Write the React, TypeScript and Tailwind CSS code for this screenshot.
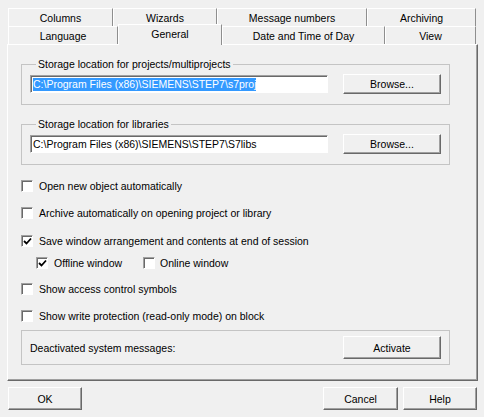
import React from "react";

// classic win32 look, Liberation Sans stands in for Tahoma
const btn =
  "flex items-center justify-center bg-[#f0f0f0] border-t border-l border-t-white border-l-white border-r border-b border-r-[#696969] border-b-[#696969] shadow-[inset_-1px_-1px_0_#a0a0a0]";
const sunken =
  "border-t border-l border-t-[#a0a0a0] border-l-[#a0a0a0] border-r border-b border-r-white border-b-white shadow-[inset_1px_1px_0_#696969]";

const Tab = ({ label, w, active }: { label: string; w: string; active?: boolean }) => (
  <div
    className={`${w} flex items-center justify-center border-t border-l border-t-white border-l-white border-r border-r-[#8e8e8e] bg-[#f0f0f0] ${
      active ? "relative z-10 h-[21px] -mt-[2px] pb-[2px]" : "h-[18px] pt-[1px]"
    }`}
  >
    {label}
  </div>
);

const Check = ({ checked }: { checked?: boolean }) => (
  <div className={`w-[12px] h-[12px] shrink-0 bg-white ${sunken} flex items-center justify-center`}>
    {checked && (
      <svg width="9" height="9" viewBox="0 0 9 9" className="mt-[1px] ml-[1px]">
        <path d="M1 4 L3.5 6.5 L8 1.5" stroke="#000" strokeWidth="1.8" fill="none" />
      </svg>
    )}
  </div>
);

const CheckRow = ({ label, checked, className }: { label: string; checked?: boolean; className: string }) => (
  <div className={`flex items-center h-[12px] ${className}`}>
    <Check checked={checked} />
    <span className="ml-[6px]">{label}</span>
  </div>
);

const PathBox = ({ title, path, selected }: { title: string; path: string; selected?: boolean }) => (
  <fieldset className="w-[429px] border border-[#c4c4c4] pl-[8px] pr-[8px] pt-[4px] pb-[10px] mt-[13px]">
    <legend className="ml-[6px] px-[2px] leading-[12px]">{title}</legend>
    <div className="flex items-center justify-between h-[20px]">
      <div className={`w-[298px] h-[18px] bg-white ${sunken} flex items-center pl-[2px]`}>
        <span className={selected ? "bg-[#3399ff] text-white leading-[13px]" : "leading-[13px]"}>{path}</span>
      </div>
      <button className={`${btn} w-[98px] h-[20px]`}>Browse...</button>
    </div>
  </fieldset>
);

export default function App() {
  return (
    <div className="w-[484px] h-[417px] bg-[#f0f0f0] pt-[8px] text-[10.5px] leading-[12px] text-black font-['Liberation_Sans',Arial,sans-serif] overflow-hidden">
      {/* tabs */}
      <div className="pl-[8px]">
        <div className="flex h-[18px]">
          <Tab label="Columns" w="w-[105px]" />
          <Tab label="Wizards" w="w-[104px]" />
          <Tab label="Message numbers" w="w-[150px]" />
          <Tab label="Archiving" w="w-[109px]" />
        </div>
        <div className="flex items-start h-[18px]">
          <Tab label="Language" w="w-[110px]" />
          <Tab label="General" w="w-[104px]" active />
          <Tab label="Date and Time of Day" w="w-[163px]" />
          <Tab label="View" w="w-[91px]" />
        </div>
      </div>

      {/* page */}
      <div className="ml-[7px] w-[471px] h-[337px] border-t border-l border-t-white border-l-white border-r border-b border-r-[#696969] border-b-[#696969] shadow-[inset_-1px_-1px_0_#a0a0a0] pl-[13px] flex flex-col">
        <PathBox title="Storage location for projects/multiprojects" path={"C:\\Program Files (x86)\\SIEMENS\\STEP7\\s7proj"} selected />
        <PathBox title="Storage location for libraries" path={"C:\\Program Files (x86)\\SIEMENS\\STEP7\\S7libs"} />

        <CheckRow label="Open new object automatically" className="mt-[15px]" />
        <CheckRow label="Archive automatically on opening project or library" className="mt-[15px]" />
        <CheckRow label="Save window arrangement and contents at end of session" checked className="mt-[16px]" />
        <div className="flex items-center h-[12px] mt-[10px] pl-[15px]">
          <Check checked />
          <span className="ml-[6px] w-[89px]">Offline window</span>
          <Check />
          <span className="ml-[5px]">Online window</span>
        </div>
        <CheckRow label="Show access control symbols" className="mt-[14px]" />
        <CheckRow label="Show write protection (read-only mode) on block" className="mt-[15px]" />

        <div className="w-[429px] h-[35px] mt-[8px] border border-[#c4c4c4] pl-[8px] pr-[8px] flex items-center justify-between">
          <span>Deactivated system messages:</span>
          <button className={`${btn} w-[98px] h-[23px]`}>Activate</button>
        </div>
      </div>

      {/* dialog buttons */}
      <div className="flex mt-[6px] pl-[8px]">
        <button className={`${btn} w-[74px] h-[23px]`}>OK</button>
        <button className={`${btn} w-[75px] h-[23px] ml-auto`}>Cancel</button>
        <button className={`${btn} w-[74px] h-[23px] ml-[5px] mr-[7px]`}>Help</button>
      </div>
    </div>
  );
}
